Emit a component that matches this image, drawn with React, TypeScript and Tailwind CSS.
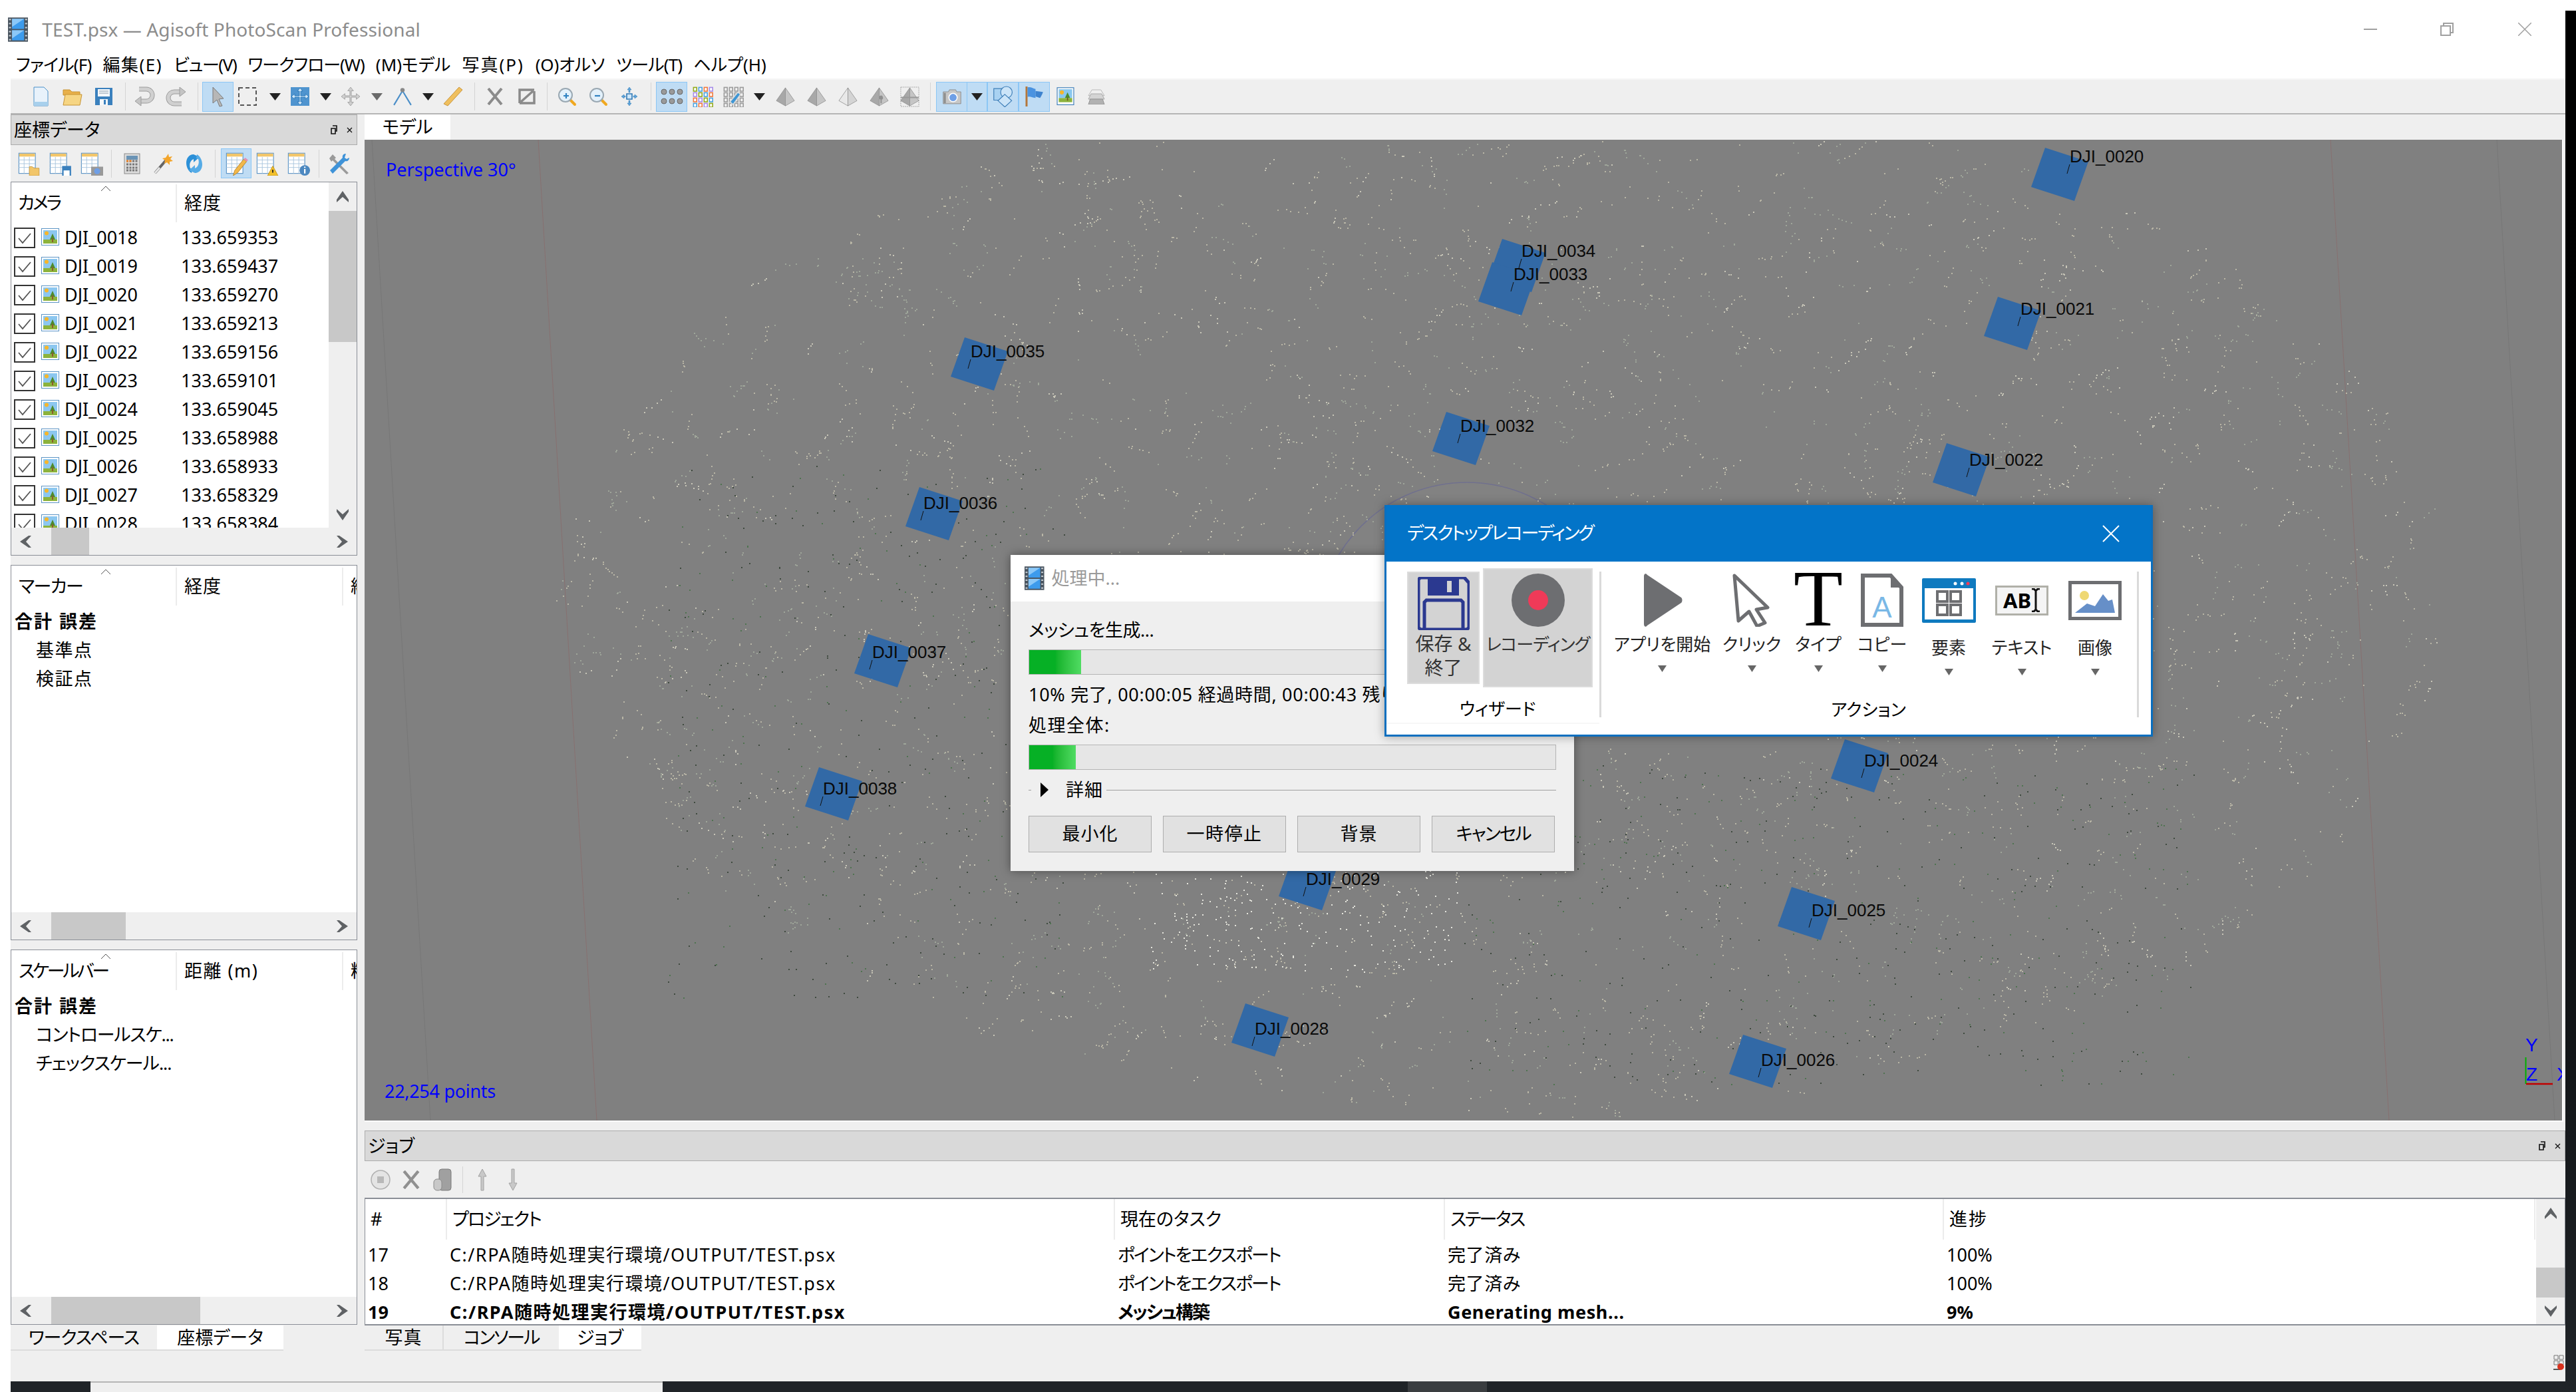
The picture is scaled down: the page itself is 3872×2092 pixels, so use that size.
import React from "react";

const rows = [
  ["DJI_0018", "133.659353"],
  ["DJI_0019", "133.659437"],
  ["DJI_0020", "133.659270"],
  ["DJI_0021", "133.659213"],
  ["DJI_0022", "133.659156"],
  ["DJI_0023", "133.659101"],
  ["DJI_0024", "133.659045"],
  ["DJI_0025", "133.658988"],
  ["DJI_0026", "133.658933"],
  ["DJI_0027", "133.658329"],
  ["DJI_0028", "133.658384"],
];

const menus: [string, string][] = [
  ["ファイル(F)", "tracking-[-0.8px]"],
  ["編集(E)", "tracking-[1.5px]"],
  ["ビュー(V)", "tracking-[-1.4px]"],
  ["ワークフロー(W)", "tracking-[-1px]"],
  ["(M)モデル", "tracking-[0px]"],
  ["写真(P)", "tracking-[2px]"],
  ["(O)オルソ", "tracking-[-0.2px]"],
  ["ツール(T)", "tracking-[-0.8px]"],
  ["ヘルプ(H)", "tracking-[0px]"],
];

// camera: centre x, y, label x, label centre y (page coordinates)
const cameras: [string, number, number, number, number][] = [
  ["DJI_0020", 3096, 262, 3111, 235],
  ["DJI_0034", 2280, 399, 2287, 377],
  ["DJI_0033", 2265, 434, 2275, 412],
  ["DJI_0021", 3025, 486, 3037, 464],
  ["DJI_0035", 1472, 547, 1459, 528],
  ["DJI_0032", 2196, 659, 2195, 640],
  ["DJI_0022", 2948, 706, 2960, 691],
  ["DJI_0036", 1404, 772, 1388, 756],
  ["DJI_0037", 1327, 993, 1311, 980],
  ["DJI_0038", 1253, 1193, 1237, 1185],
  ["DJI_0024", 2795, 1151, 2802, 1143],
  ["DJI_0029", 1965, 1328, 1963, 1321],
  ["DJI_0025", 2715, 1373, 2723, 1368],
  ["DJI_0028", 1894, 1548, 1886, 1546],
  ["DJI_0026", 2642, 1595, 2647, 1593],
];

function makeCloud() {
  let seed = 12345;
  const rnd = () => {
    seed = (seed * 1664525 + 1013904223) % 4294967296;
    return seed / 4294967296;
  };
  const groups: Record<string, string> = { "#b9b6a6": "", "#c8c6b8": "", "#9fa69a": "", "#e4e4dc": "", "#3f4a3f": "", "#4f7350": "" };
  const add = (c: string, x: number, y: number, s: number) => {
    if (x < 552 || x > 3850 || y < 212 || y > 1682) return;
    groups[c] += `M${Math.round(x)} ${Math.round(y)}h${s}v${s}h-${s}z`;
  };
  // main ring of light points, in short streaks
  for (let i = 0; i < 2400; i++) {
    const a = rnd() * Math.PI * 2;
    const r = Math.sqrt(rnd());
    const cx = 2260 + Math.cos(a) * r * 1420;
    const cy = 900 + Math.sin(a) * r * 780;
    const n = 1 + Math.floor(rnd() * 5);
    const dir = rnd() * Math.PI;
    const c = rnd() < 0.5 ? "#b9b6a6" : rnd() < 0.6 ? "#9fa69a" : "#c8c6b8";
    for (let k = 0; k < n; k++) {
      const t = (rnd() - 0.5) * 40;
      add(c, cx + Math.cos(dir) * t + (rnd() - 0.5) * 6, cy + Math.sin(dir) * t + (rnd() - 0.5) * 6, 2);
    }
  }
  // bright patch under the progress dialog
  for (let i = 0; i < 260; i++) {
    add("#e4e4dc", 1960 + (rnd() - 0.5) * 460, 1375 + (rnd() - 0.5) * 170, 2);
  }
  // dark points on the edges and in the lower part
  for (let i = 0; i < 900; i++) {
    const left = rnd() < 0.45;
    const x = left ? 1000 + rnd() * 600 : 2200 + rnd() * 1100;
    const y = left ? 700 + rnd() * 800 : 1150 + rnd() * 480;
    add(rnd() < 0.6 ? "#3f4a3f" : "#4f7350", x, y, 2);
  }
  return groups;
}
const cloud = makeCloud();

const Film = ({ size = 36 }: { size?: number }) => (
  <svg width={size * 0.82} height={size} viewBox="0 0 30 36">
    <rect x="0" y="0" width="30" height="36" fill="#4a5560" />
    <rect x="6" y="2" width="18" height="15" fill="#3d9bec" />
    <rect x="6" y="19" width="18" height="15" fill="#3d9bec" />
    <path d="M6 2h18L6 14zM6 19h18L6 31z" fill="#8cc8f7" />
    {[3, 9, 15, 21, 27, 33].map((y) => (
      <g key={y}>
        <rect x="1.5" y={y - 1} width="3" height="2" fill="#c9d0d6" />
        <rect x="25.5" y={y - 1} width="3" height="2" fill="#c9d0d6" />
      </g>
    ))}
  </svg>
);

const Caret = ({ dim }: { dim?: boolean }) => (
  <svg width="17" height="11" viewBox="0 0 17 11">
    <path d="M0 0h17L8.5 11z" fill={dim ? "#6a6a6a" : "#222"} />
  </svg>
);

const Tb = ({ cls, active, children }: { cls: string; active?: boolean; children?: React.ReactNode }) => (
  <div className={`${cls} flex shrink-0 items-center justify-center ${active ? "h-[45px] border border-[#8cc6f5] bg-[#bfdcf4]" : "h-full"}`}>{children}</div>
);

const Sep = ({ cls }: { cls: string }) => (
  <div className={`${cls} flex h-full shrink-0 items-center justify-center`}>
    <div className="h-[42px] w-px bg-[#d4d4d4]" />
  </div>
);

const I = ({ children, w = 32, h = 32 }: { children: React.ReactNode; w?: number; h?: number }) => (
  <svg width={w} height={h} viewBox="0 0 32 32">
    {children}
  </svg>
);

const Pyramid = ({ kind }: { kind: number }) => (
  <I w={31} h={31}>
    <path d="M16 2L2 22l14 8z" fill={kind === 2 ? "#e8e8e8" : "#a8a8a8"} stroke="#8f8f8f" strokeWidth=".8" />
    <path d="M16 2l14 20-14 8z" fill={kind === 2 ? "#d4d4d4" : "#c5c5c5"} stroke="#8f8f8f" strokeWidth=".8" />
    {kind === 3 && <path d="M19 14c-3 0-4 3-3 5 1 1 2 1 2 1v6h2v-6s2 0 2-2-1-4-3-4z" fill="#909090" />}
    {kind === 4 && <path d="M2 1h28v30H2z" fill="none" stroke="#777" strokeWidth=".8" strokeDasharray="1.5 1.5" />}
    {kind === 4 && <path d="M2 17h28" stroke="#999" strokeWidth="2" />}
  </I>
);

const Sheet = ({ children }: { children?: React.ReactNode }) => (
  <I w={36} h={36}>
    <rect x="3" y="2" width="22" height="27" fill="#fff" stroke="#5c94c6" />
    <rect x="3.5" y="2.5" width="21" height="4" fill="#f2c66a" />
    <path d="M3 11h22M3 16h22M3 21h22M10 7v22M17 7v22" stroke="#a8c4dc" strokeWidth=".8" />
    {children}
  </I>
);

const Thumb = () => (
  <svg width="27" height="27" viewBox="0 0 27 27">
    <rect x=".5" y=".5" width="26" height="25" fill="#fff" stroke="#5d95c5" />
    <rect x="3" y="3" width="21" height="14" fill="#8cc7f0" />
    <rect x="3" y="17" width="21" height="6" fill="#8cb33d" />
    <circle cx="8" cy="7.5" r="3" fill="#f6b62b" />
    <path d="M17 8l4 9h-8z" fill="#4f8b2b" />
    <rect x="16" y="15" width="2" height="6" fill="#8a5a2b" />
  </svg>
);

const Chevron = ({ dir }: { dir: "up" | "down" | "left" | "right" }) => {
  const d = {
    up: "M0 13L9 0l9 13v4L9 9l-9 8z",
    down: "M0 5l9 13 9-13V1L9 9 0 1z",
    left: "M13 0L0 9l13 9h4L9 9l8-9z",
    right: "M5 0l13 9-13 9H1l8-9-8-9z",
  }[dir];
  return (
    <svg width="18" height="18" viewBox="0 0 18 18">
      <path d={d} fill="#5f6265" />
    </svg>
  );
};

const SortMark = () => (
  <svg className="absolute left-[134px] top-[5px]" width="16" height="9" viewBox="0 0 16 9">
    <path d="M1 8l7-7 7 7" fill="none" stroke="#555" />
  </svg>
);

const HBar = ({ thumb }: { thumb: string }) => (
  <div className="flex h-[41px] shrink-0 items-center bg-[#efefef]">
    <div className="flex w-[44px] shrink-0 justify-center">
      <Chevron dir="left" />
    </div>
    <div className="min-w-0 flex-1 self-stretch">
      <div className={`${thumb} h-full bg-[#c8c8c8]`} />
    </div>
    <div className="flex w-[44px] shrink-0 justify-center">
      <Chevron dir="right" />
    </div>
  </div>
);

const DockTitle = ({ title, cls }: { title: string; cls: string }) => (
  <div className={`${cls} flex h-[46px] shrink-0 items-center border border-[#ababab] bg-[#d9d9d9] pl-[4px] pr-[6px] text-[27px]`}>
    <span className="flex-1">{title}</span>
    <svg width="10" height="14" viewBox="0 0 10 14" className="mr-[14px]">
      <path d="M3 1h6v8H7M1 5h6v8H1z" fill="none" stroke="#111" strokeWidth="1.6" />
    </svg>
    <svg width="9" height="9" viewBox="0 0 9 9">
      <path d="M1 1l7 7M8 1L1 8" stroke="#111" strokeWidth="1.3" />
    </svg>
  </div>
);

const TreePanel = ({
  head,
  second,
  third,
  sub,
  thumb,
}: {
  head: React.ReactNode;
  second: React.ReactNode;
  third: string;
  sub: [string, string][];
  thumb: string;
}) => (
  <div className="mt-[14px] flex h-[564px] shrink-0 flex-col border border-[#8a8e96] bg-white">
    <div className="relative flex h-[60px] shrink-0 overflow-hidden pt-[3px] text-[27px]">
      <SortMark />
      <div className="flex w-[249px] shrink-0 items-center border-r-2 border-[#ececec] pl-[11px]">{head}</div>
      <div className="flex w-[250px] shrink-0 items-center border-r-2 border-[#ececec] pl-[11px]">{second}</div>
      <div className="flex items-center pl-[11px]">{third}</div>
    </div>
    <div className="flex min-h-0 flex-1 flex-col pt-[3px] text-[27px]">
      <div className="flex h-[43px] shrink-0 items-center pl-[5px] font-bold tracking-[2px]">合計 誤差</div>
      {sub.map(([s, track]) => (
        <div key={s} className={`${track} flex h-[43px] shrink-0 items-center pl-[37px]`}>
          {s}
        </div>
      ))}
    </div>
    <HBar thumb={thumb} />
  </div>
);

const jobCols = "grid grid-cols-[123px_1004px_496px_750px_889px]";
const jobHeads: [string, string][] = [
  ["#", ""],
  ["プロジェクト", "tracking-[-2px]"],
  ["現在のタスク", ""],
  ["ステータス", "tracking-[-2.5px]"],
  ["進捗", "tracking-[2px]"],
];
const jobRows = [
  ["17", "C:/RPA随時処理実行環境/OUTPUT/TEST.psx", "ポイントをエクスポート", "完了済み", "100%"],
  ["18", "C:/RPA随時処理実行環境/OUTPUT/TEST.psx", "ポイントをエクスポート", "完了済み", "100%"],
  ["19", "C:/RPA随時処理実行環境/OUTPUT/TEST.psx", "メッシュ構築", "Generating mesh...", "9%"],
];
const jobTrack = ["", "tracking-[1.5px]", "tracking-[-2px]", "tracking-[0.6px]", ""];

const ActionItem = ({ cls, label, low, children }: { cls: string; label: string; low?: boolean; children: React.ReactNode }) => (
  <div className={`${cls} flex shrink-0 flex-col items-center`}>
    <div className="flex h-[80px] items-center justify-center">{children}</div>
    <div className={`${low ? "mt-[13px]" : "mt-[8px]"} h-[36px] whitespace-nowrap text-[26px] leading-[36px] text-[#222]`}>{label}</div>
    <svg width="13" height="10" viewBox="0 0 13 10" className="mt-[14px]">
      <path d="M0 0h13L6.5 10z" fill="#666" />
    </svg>
  </div>
);

const Btn = ({ children, cls }: { children: React.ReactNode; cls?: string }) => (
  <div className={`${cls ?? ""} flex h-[55px] w-[185px] items-center justify-center border border-[#adadad] bg-[#e1e1e1] text-[27px]`}>{children}</div>
);

const Progress = ({ fill }: { fill: string }) => (
  <div className="h-[38px] border border-[#b5b5b5] bg-[#e6e6e6]">
    <div className={`${fill} h-full bg-linear-to-r from-[#06b025] from-50% to-[#4fdc62]`} />
  </div>
);

export default function App() {
  return (
    <div className="relative flex h-[2092px] w-[3872px] overflow-hidden bg-white font-['Noto_Sans','Noto_Sans_CJK_JP',sans-serif] text-black [font-feature-settings:'palt']">
      <div className="flex w-[3856px] shrink-0 flex-col">
        {/* title */}
        <div className="flex h-[80px] shrink-0 items-center pl-[12px] pt-[8px]">
          <Film size={37} />
          <span className="ml-[21px] text-[28px] tracking-[0.1px] text-[#8c8c8c]">TEST.psx — Agisoft PhotoScan Professional</span>
          <div className="ml-auto flex items-center pr-[51px]">
            <svg width="20" height="20" viewBox="0 0 20 20">
              <path d="M0 10h20" stroke="#a0a0a0" strokeWidth="2" />
            </svg>
            <svg width="20" height="20" viewBox="0 0 20 20" className="ml-[95px]">
              <path d="M1 5h14v14H1zM5 5V1h14v14h-4" fill="none" stroke="#a0a0a0" strokeWidth="2" />
            </svg>
            <svg width="20" height="20" viewBox="0 0 20 20" className="ml-[97px]">
              <path d="M0 0l20 20M20 0L0 20" stroke="#a0a0a0" strokeWidth="1.5" />
            </svg>
          </div>
        </div>
        {/* menu */}
        <div className="flex h-[38px] shrink-0 items-center gap-[17px] pb-[3px] pl-[24px] text-[26px]">
          {menus.map(([m, track]) => (
            <span key={m} className={`${track} whitespace-nowrap`}>
              {m}
            </span>
          ))}
        </div>

        <div className="ml-[16px] flex min-h-0 flex-1 flex-col bg-[#efefef]">
          {/* main toolbar */}
          <div className="flex h-[54px] shrink-0 items-center border-b-2 border-t-2 border-b-[#b5b5b5] border-t-[#f5f5f5] pl-[22px]">
            <Tb cls="w-[47px]">
              <I>
                <path d="M5 2h15l6 6v22H5z" fill="#e8f2fb" stroke="#4a90c8" />
                <path d="M5 24h21v6H5z" fill="#a8d0ec" />
              </I>
            </Tb>
            <Tb cls="w-[47px]">
              <I>
                <path d="M2 6h10l3 3h12v5H2z" fill="#e8b04a" stroke="#c79333" />
                <path d="M2 29l3-16h25l-3 16z" fill="#f6d583" stroke="#c79333" />
              </I>
            </Tb>
            <Tb cls="w-[48px]">
              <I>
                <path d="M3 3h26v26H3z" fill="#3a80bd" />
                <path d="M7 5h18v11H7z" fill="#f4f7fa" />
                <path d="M9 8h14M9 11h14" stroke="#8a9aaa" />
                <path d="M10 20h12v9H10z" fill="#f4f7fa" />
                <path d="M16 21h3v7h-3z" fill="#3a80bd" />
              </I>
            </Tb>
            <Sep cls="w-[16px]" />
            <Tb cls="w-[42px]">
              <I>
                <path d="M8 5h11a9 9 0 0 1 0 18H10" fill="none" stroke="#9c9c9c" strokeWidth="7" />
                <path d="M8 5h11a9 9 0 0 1 0 18H10" fill="none" stroke="#d0d0d0" strokeWidth="5" />
                <path d="M11 16L2 23l9 7z" fill="#c4c4c4" stroke="#9c9c9c" />
              </I>
            </Tb>
            <Tb cls="w-[54px]">
              <I>
                <path d="M24 27H13a9 9 0 0 1 0-18h9" fill="none" stroke="#9c9c9c" strokeWidth="7" />
                <path d="M24 27H13a9 9 0 0 1 0-18h9" fill="none" stroke="#d0d0d0" strokeWidth="5" />
                <path d="M21 2l9 7-9 7z" fill="#c4c4c4" stroke="#9c9c9c" />
              </I>
            </Tb>
            <Sep cls="w-[10px]" />
            <Tb cls="ml-[2px] w-[47px]" active>
              <I>
                <path d="M8 2l16 17-7 1 5 10-4 1-4-10-6 5z" fill="#b7b7b7" stroke="#7a7a7a" />
              </I>
            </Tb>
            <Tb cls="w-[42px]">
              <I>
                <path d="M3 3h26v26H3z" fill="none" stroke="#555" strokeWidth="2" strokeDasharray="6 4" />
              </I>
            </Tb>
            <Tb cls="w-[40px]">
              <Caret />
            </Tb>
            <Tb cls="ml-[4px] w-[28px]">
              <svg width="28" height="28" viewBox="0 0 28 28" className="bg-[#4f94cf]">
                <path d="M14 1l4 5h-3v7h7v-3l5 4-5 4v-3h-7v7h3l-4 5-4-5h3v-7H6v3l-5-4 5-4v3h7V6h-3z" fill="#cfe6f8" stroke="#1f6fb3" strokeWidth=".8" />
              </svg>
            </Tb>
            <Tb cls="w-[48px]">
              <Caret />
            </Tb>
            <Tb cls="w-[28px]">
              <svg width="30" height="30" viewBox="0 0 28 28" className="shrink-0">
                <path d="M14 1l4 5h-3v7h7v-3l5 4-5 4v-3h-7v7h3l-4 5-4-5h3v-7H6v3l-5-4 5-4v3h7V6h-3z" fill="#d0d0d0" stroke="#9c9c9c" strokeWidth=".8" />
              </svg>
            </Tb>
            <Tb cls="w-[50px]">
              <Caret dim />
            </Tb>
            <Tb cls="w-[28px]">
              <svg width="30" height="30" viewBox="0 0 28 28" className="shrink-0">
                <path d="M14 6L2 26M14 6l12 20" fill="none" stroke="#4a8ec8" strokeWidth="2" />
                <circle cx="14" cy="5" r="3" fill="#888" />
              </svg>
            </Tb>
            <Tb cls="w-[48px]">
              <Caret />
            </Tb>
            <Tb cls="w-[28px]">
              <svg width="32" height="32" viewBox="0 0 32 32" className="shrink-0">
                <path d="M25 2l5 4L8 30l-6-3z" fill="#efbf5e" stroke="#c9953a" />
              </svg>
            </Tb>
            <Sep cls="w-[36px]" />
            <Tb cls="w-[26px]">
              <svg width="26" height="26" viewBox="0 0 26 26" className="shrink-0">
                <path d="M3 1l10 12L23 1M3 25l10-12 10 12" fill="none" stroke="#8b8b8b" strokeWidth="4" />
              </svg>
            </Tb>
            <Tb cls="ml-[20px] w-[28px]">
              <svg width="28" height="28" viewBox="0 0 28 28" className="shrink-0">
                <path d="M4 24V4h22M4 24h22V6M6 22L24 6" fill="none" stroke="#8a8a8a" strokeWidth="3.5" />
              </svg>
            </Tb>
            <Sep cls="w-[34px]" />
            {["M10 14h8M14 10v8", "M10 14h8"].map((d, i) => (
              <Tb key={i} cls={i ? "ml-[21px] w-[26px]" : "w-[26px]"}>
                <svg width="30" height="30" viewBox="0 0 30 30" className="shrink-0">
                  <path d="M19 19l8 8" stroke="#f0a820" strokeWidth="4" strokeLinecap="round" />
                  <circle cx="13" cy="13" r="10" fill="#e3f1fb" stroke="#9aa8b2" strokeWidth="2" />
                  <path d={d} stroke="#2f82c2" strokeWidth="2.2" />
                </svg>
              </Tb>
            ))}
            <Tb cls="ml-[21px] w-[26px]">
              <svg width="26" height="30" viewBox="0 0 26 30" className="shrink-0">
                <path d="M9 11h8v8H9z" fill="#cfe6f8" stroke="#2f78b5" strokeWidth="1.6" />
                <path d="M13 1l3 4h-2v4h-2V5h-2zM13 29l3-4h-2v-4h-2v4h-2zM1 15l4-3v2h2v2H5v2zM25 15l-4-3v2h-2v2h2v2z" fill="#5da2d8" stroke="#2f78b5" strokeWidth=".5" />
              </svg>
            </Tb>
            <Tb cls="w-[27px]">
              <div className="ml-[12px] h-[42px] w-px bg-[#d4d4d4]" />
            </Tb>
            <Tb cls="w-[47px]" active>
              <svg width="36" height="26" viewBox="0 0 36 26">
                {[6, 18, 30].map((x) => [6, 20].map((y) => <circle key={`${x}${y}`} cx={x} cy={y} r="4" fill="#9a9a9a" stroke="#666" />))}
              </svg>
            </Tb>
            <Tb cls="w-[46px]">
              <svg width="32" height="32" viewBox="0 0 40 40">
                {[3, 13, 23, 33].map((x, i) =>
                  [3, 13, 23, 33].map((y, j) => (
                    <rect key={`${x}${y}`} x={x} y={y} width="6" height="7" fill="#fff" stroke={["#93ab1e", "#4aa2e0", "#f0793e", "#a68be8"][(i + j * 3) % 4]} strokeWidth="2" />
                  ))
                )}
              </svg>
            </Tb>
            <Tb cls="w-[46px]">
              <svg width="32" height="32" viewBox="0 0 40 40">
                {[3, 13, 23, 33].map((x) =>
                  [3, 13, 23, 33].map((y) => <rect key={`${x}${y}`} x={x} y={y} width="6" height="7" fill="#f2f2f2" stroke="#9b9b9b" strokeWidth="2" />)
                )}
                <path d="M14 30l15-18 5 4-14 19z" fill="#3f96d4" stroke="#ddd" strokeWidth="2" />
              </svg>
            </Tb>
            <Tb cls="w-[32px]">
              <Caret />
            </Tb>
            <Tb cls="w-[46px]">
              <Pyramid kind={0} />
            </Tb>
            <Tb cls="ml-[1px] w-[46px]">
              <Pyramid kind={1} />
            </Tb>
            <Tb cls="ml-[1px] w-[46px]">
              <Pyramid kind={2} />
            </Tb>
            <Tb cls="ml-[1px] w-[46px]">
              <Pyramid kind={3} />
            </Tb>
            <Tb cls="w-[46px]">
              <Pyramid kind={4} />
            </Tb>
            <Sep cls="w-[17px]" />
            <Tb cls="w-[47px]" active>
              <svg width="28" height="24" viewBox="0 0 36 30">
                <path d="M1 6h10l2-4h12l2 4h8v23H1z" fill="#c7c7c7" stroke="#7e7e7e" />
                <circle cx="20" cy="17" r="8" fill="#6f9fe6" stroke="#fff" strokeWidth="2" />
                <rect x="2" y="8" width="4" height="20" fill="#8e8e8e" />
              </svg>
            </Tb>
            <Tb cls="w-[30px] border-l-0" active>
              <Caret />
            </Tb>
            <Tb cls="w-[47px]" active>
              <svg width="30" height="32" viewBox="0 0 38 40">
                <path d="M1 5h20v22H1z" fill="#a9d2f2" stroke="#3f7fb8" strokeWidth="1.5" />
                <circle cx="25" cy="12" r="11" fill="#cbe4f8" stroke="#3f7fb8" strokeWidth="1.5" />
                <path d="M22 16l13 12-13 12-13-12z" fill="#cbe4f8" stroke="#3f7fb8" strokeWidth="1.5" />
              </svg>
            </Tb>
            <Tb cls="w-[47px]" active>
              <svg width="30" height="32" viewBox="0 0 40 42">
                <rect x="2" y="1" width="4" height="40" fill="#b4763a" />
                <path d="M6 3c6-2 10 2 16 3v18c-6 0-10-4-16-2z" fill="#4b93e0" />
                <path d="M22 10l15 2c-2 6-4 9-6 12l-9-3z" fill="#3e83cf" />
              </svg>
            </Tb>
            <Tb cls="w-[46px]">
              <svg width="27" height="28" viewBox="0 0 34 36">
                <rect x="1" y="1" width="32" height="33" fill="#fff" stroke="#3f7fb8" strokeWidth="1.5" />
                <rect x="4" y="4" width="26" height="17" fill="#8ac8ee" />
                <rect x="4" y="21" width="26" height="8" fill="#8cb33d" />
                <circle cx="10" cy="10" r="4" fill="#f6b62b" />
                <path d="M21 10l5 11H16z" fill="#4f8b2b" />
                <rect x="20" y="20" width="2" height="6" fill="#7a4f20" />
              </svg>
            </Tb>
            <Tb cls="w-[48px]">
              <svg width="30" height="24" viewBox="0 0 38 36">
                <path d="M9 3h20l8 13H1z" fill="#efefef" stroke="#b8b8b8" strokeWidth="1.5" />
                <path d="M7 12h24l6 12H1z" fill="#d4d4d4" stroke="#a8a8a8" strokeWidth="1.5" />
                <path d="M5 24h28l4 12H1z" fill="#b2b2b2" stroke="#939393" strokeWidth="1.5" />
              </svg>
            </Tb>
          </div>

          {/* dock area */}
          <div className="flex min-h-0 shrink-0">
            {/* left column */}
            <div className="flex w-[521px] shrink-0 flex-col">
              <DockTitle title="座標データ" cls="" />
              <div className="flex h-[55px] shrink-0 items-center pl-[3px]">
                <Tb cls="w-[47px]">
                  <Sheet>
                    <path d="M17 20h4l2 2h7v10H17z" fill="#f2c66a" stroke="#c79333" strokeWidth=".7" />
                  </Sheet>
                </Tb>
                <Tb cls="w-[47px]">
                  <Sheet>
                    <rect x="19" y="19" width="12" height="13" fill="#3a80bd" />
                    <rect x="21" y="25" width="8" height="7" fill="#fff" />
                  </Sheet>
                </Tb>
                <Tb cls="w-[47px]">
                  <Sheet>
                    <rect x="16" y="20" width="16" height="12" fill="#999" />
                    <circle cx="24" cy="26" r="4" fill="#6f9fe6" />
                  </Sheet>
                </Tb>
                <Sep cls="w-[14px]" />
                <Tb cls="w-[47px]">
                  <I>
                    <rect x="5" y="1" width="23" height="30" fill="#dcdcdc" stroke="#8a8a8a" />
                    <rect x="8" y="4" width="17" height="6" fill="#6a93b5" />
                    {[12, 17, 22, 26].map((y) => (
                      <path key={y} d={`M8 ${y}h17`} stroke="#777" strokeWidth="3" strokeDasharray="3 1.5" />
                    ))}
                    <path d="M8 12h8" stroke="#e9842b" strokeWidth="3" strokeDasharray="3 1.5" />
                  </I>
                </Tb>
                <Tb cls="w-[47px]">
                  <I>
                    <path d="M4 30L22 9" stroke="#666" strokeWidth="4" />
                    <path d="M4 30l7-8" stroke="#e6e6e6" strokeWidth="3" />
                    <path d="M24 1l1 5 5-1-3 4 4 3-5 1 0 5-4-4-4 2 1-5-4-3 5-1z" fill="#f3a52b" />
                  </I>
                </Tb>
                <Tb cls="w-[47px]">
                  <I>
                    <path d="M15 2C8 2 4 8 4 15s4 13 8 15l1-6-3-1c-2-6 0-12 5-14v5l9-8z" fill="#2c90d8" />
                    <path d="M17 30c7 0 11-6 11-13S24 4 20 2l-1 6 3 1c2 6 0 12-5 14v-5l-9 8z" fill="#55abe6" />
                  </I>
                </Tb>
                <Sep cls="w-[16px]" />
                <Tb cls="ml-[1px] w-[46px]" active>
                  <Sheet>
                    <path d="M12 32l2-7L26 10l4 3-12 15z" fill="#f2b84a" stroke="#a97820" strokeWidth=".7" />
                    <path d="M26 10l2-2 4 3-2 2z" fill="#e58fb0" />
                  </Sheet>
                </Tb>
                <Tb cls="w-[46px]">
                  <Sheet>
                    <path d="M24 19l7 13H17z" fill="#f3c02b" stroke="#b98a10" strokeWidth=".7" />
                    <path d="M24 24v4" stroke="#222" strokeWidth="1.6" />
                  </Sheet>
                </Tb>
                <Tb cls="w-[47px]">
                  <Sheet>
                    <circle cx="25" cy="25" r="7" fill="#4c88c0" />
                    <path d="M25 23v6M25 20v1.6" stroke="#fff" strokeWidth="2" />
                  </Sheet>
                </Tb>
                <Sep cls="w-[16px]" />
                <Tb cls="w-[46px]">
                  <I>
                    <path d="M6 2l5 5-2 2 21 21-3 2L6 11 4 13 1 8z" fill="#9a9a9a" />
                    <path d="M26 1c-4 0-6 3-5 6L2 26l4 5L25 12c3 1 6-1 6-5l-4 2-3-2z" fill="#3f93d8" />
                  </I>
                </Tb>
              </div>

              {/* camera table */}
              <div className="flex h-[562px] shrink-0 flex-col border border-[#8a8e96] bg-white">
                <div className="flex min-h-0 flex-1">
                  <div className="min-w-0 flex-1 overflow-hidden">
                    <div className="relative flex h-[60px] pt-[3px] text-[27px]">
                      <SortMark />
                      <div className="flex w-[249px] shrink-0 items-center border-r-2 border-[#ececec] pl-[10px] tracking-[-3px]">カメラ</div>
                      <div className="flex items-center pl-[11px] tracking-[1px]">経度</div>
                    </div>
                    <div className="pt-[2px]">
                      {rows.map(([name, lon]) => (
                        <div key={name} className="flex h-[43px] items-center text-[27px]">
                          <div className="ml-[4px] flex h-[31px] w-[32px] shrink-0 items-center justify-center border-2 border-[#333]">
                            <svg width="22" height="20" viewBox="0 0 22 20">
                              <path d="M2 10l6 7L20 3" fill="none" stroke="#555" strokeWidth="1.8" />
                            </svg>
                          </div>
                          <div className="mb-[3px] ml-[9px] shrink-0">
                            <Thumb />
                          </div>
                          <div className="ml-[8px] w-[175px] shrink-0">{name}</div>
                          <div className="whitespace-nowrap">{lon}</div>
                        </div>
                      ))}
                    </div>
                  </div>
                  <div className="flex w-[42px] shrink-0 flex-col bg-[#efefef]">
                    <div className="flex h-[43px] shrink-0 items-center justify-center">
                      <Chevron dir="up" />
                    </div>
                    <div className="min-h-0 flex-1">
                      <div className="h-[197px] bg-[#c8c8c8]" />
                    </div>
                    <div className="flex h-[40px] shrink-0 items-center justify-center">
                      <Chevron dir="down" />
                    </div>
                  </div>
                </div>
                <HBar thumb="w-[57px] ml-[16px]" />
              </div>

              <TreePanel
                head={<span className="tracking-[-1.5px]">マーカー</span>}
                second={<span className="tracking-[1px]">経度</span>}
                third="緯"
                sub={[
                  ["基準点", "tracking-[1.5px]"],
                  ["検証点", "tracking-[1.5px]"],
                ]}
                thumb="w-[112px] ml-[16px]"
              />
              <TreePanel
                head={<span className="tracking-[-3.3px]">スケールバー</span>}
                second={<span className="tracking-[1.5px]">距離 (m)</span>}
                third="精"
                sub={[
                  ["コントロールスケ...", "tracking-[-1.2px]"],
                  ["チェックスケール...", "tracking-[-1px]"],
                ]}
                thumb="w-[224px] ml-[16px]"
              />
            </div>

            {/* right column */}
            <div className="ml-[11px] flex min-w-0 flex-1 flex-col">
              <div className="flex h-[38px] shrink-0">
                <div className="flex w-[129px] items-center justify-center bg-white text-[27px]">モデル</div>
              </div>
              <div className="h-[1476px] shrink-0 pr-[3px]">
                <div className="relative h-full overflow-hidden border-b-2 border-r-2 border-white bg-[#808080]">
                  <svg className="absolute left-0 top-0" width="3304" height="1474" viewBox="548 210 3304 1474">
                    <path d="M559 210L647 1684M3753 210L3840 1684" stroke="#777777" strokeWidth="1" fill="none" />
                    <path d="M809 210L897 1684M3503 210L3591 1684" stroke="#877070" strokeWidth="1" fill="none" />
                    <circle cx="2205" cy="950" r="225" fill="#828282" stroke="#70708e" strokeWidth="1.5" />
                    {Object.entries(cloud).map(([c, d]) => (
                      <path key={c} d={d} fill={c} />
                    ))}
                    {cameras.map(([name, x, y]) => (
                      <polygon key={name} points={`${x - 22},${y - 40} ${x + 43},${y - 19} ${x + 22},${y + 40} ${x - 43},${y + 19}`} fill="#3269a6" />
                    ))}
                    {cameras.map(([name, , , lx, ly]) => (
                      <g key={name}>
                        <path d={`M${lx} ${ly + 12}l-4 14`} stroke="#111" strokeWidth="1" />
                        <text x={lx} y={ly + 9} fontSize="26" fill="#0a0a0a" fontFamily="Liberation Sans">
                          {name}
                        </text>
                      </g>
                    ))}
                    {/* axis gizmo */}
                    <path d="M3796.5 1589v40" stroke="#00b000" strokeWidth="2" />
                    <path d="M3797 1629h40" stroke="#c00000" strokeWidth="2.5" />
                    <g fill="#0000ff" fontSize="28" fontFamily="Liberation Sans">
                      <text x="3796" y="1580">Y</text>
                      <text x="3797" y="1624">Z</text>
                      <text x="3843" y="1624">X</text>
                    </g>
                  </svg>
                  <div className="absolute left-[32px] top-[25px] text-[27px] text-[#0000ff]">Perspective 30°</div>
                  <div className="absolute bottom-[24px] left-[30px] text-[27px] tracking-[-0.3px] text-[#0000ff]">22,254 points</div>
                </div>
              </div>

              <DockTitle title="ジョブ" cls="mt-[13px]" />
              <div className="flex h-[55px] shrink-0 items-center pl-[8px]">
                <svg width="32" height="32" viewBox="0 0 32 32">
                  <circle cx="16" cy="16" r="14" fill="#e4e4e4" stroke="#b0b0b0" strokeWidth="1.5" />
                  <rect x="11" y="11" width="10" height="10" fill="#b8b8b8" />
                </svg>
                <svg width="28" height="28" viewBox="0 0 26 26" className="ml-[16px]">
                  <path d="M3 1l10 12L23 1M3 25l10-12 10 12" fill="none" stroke="#909090" strokeWidth="4" />
                </svg>
                <svg width="30" height="34" viewBox="0 0 30 34" className="ml-[18px]">
                  <rect x="10" y="1" width="18" height="32" rx="4" fill="#a0a0a0" stroke="#7c7c7c" />
                  <rect x="2" y="16" width="12" height="17" rx="5" fill="#c8c8c8" stroke="#8a8a8a" />
                </svg>
                <div className="ml-[15px] h-[40px] w-px bg-[#d4d4d4]" />
                <svg width="14" height="34" viewBox="0 0 14 34" className="ml-[22px]">
                  <path d="M7 1l6 11H9v21H5V12H1z" fill="#c8c8c8" stroke="#a2a2a2" />
                </svg>
                <svg width="14" height="34" viewBox="0 0 14 34" className="ml-[32px]">
                  <path d="M7 33l6-11H9V1H5v21H1z" fill="#c8c8c8" stroke="#a2a2a2" />
                </svg>
              </div>

              <div className="flex h-[192px] shrink-0 border-x border-b-2 border-t-2 border-[#8a8e96] bg-white">
                <div className="min-w-0 flex-1 overflow-hidden">
                  <div className={`${jobCols} h-[61px] text-[27px]`}>
                    {jobHeads.map(([h, track]) => (
                      <div key={h} className={`${track} flex items-center border-r-2 border-[#ececec] pl-[8px]`}>
                        {h}
                      </div>
                    ))}
                  </div>
                  <div className="pt-[2px]">
                    {jobRows.map((r, i) => (
                      <div key={r[0]} className={`${jobCols} h-[43px] items-center text-[27px] ${i === 2 ? "font-bold" : ""}`}>
                        {r.map((c, j) => (
                          <div key={j} className={`${jobTrack[j]} whitespace-nowrap pl-[4px]`}>
                            {c}
                          </div>
                        ))}
                      </div>
                    ))}
                  </div>
                </div>
                <div className="flex w-[43px] shrink-0 flex-col bg-[#efefef]">
                  <div className="flex h-[43px] shrink-0 items-center justify-center">
                    <Chevron dir="up" />
                  </div>
                  <div className="min-h-0 flex-1 pt-[60px]">
                    <div className="h-[45px] bg-[#c8c8c8]" />
                  </div>
                  <div className="flex h-[40px] shrink-0 items-center justify-center">
                    <Chevron dir="down" />
                  </div>
                </div>
              </div>
            </div>
          </div>

          {/* lower tabs */}
          <div className="flex min-h-0 flex-1 text-[27px]">
            <div className="flex h-[38px] w-[521px] shrink-0">
              <div className="flex w-[220px] items-center justify-center border-b-2 border-[#dcdcdc] tracking-[-1px]">ワークスペース</div>
              <div className="flex w-[190px] items-center justify-center border-b-2 border-[#dcdcdc] bg-white">座標データ</div>
            </div>
            <div className="ml-[11px] flex h-[38px] flex-1">
              <div className="flex w-[119px] items-center justify-center border-b-2 border-r-2 border-[#dcdcdc] tracking-[1px]">写真</div>
              <div className="flex w-[173px] items-center justify-center border-b-2 border-[#dcdcdc] tracking-[-2px]">コンソール</div>
              <div className="flex w-[124px] items-center justify-center border-b-2 border-[#dcdcdc] bg-white">ジョブ</div>
              <div className="ml-auto mr-[2px] mt-[44px] h-[26px]">
                <svg width="16" height="28" viewBox="0 0 16 28">
                  <path d="M1 1h6v6H1zM9 1h6v6H9zM1 9h6v6H1zM9 9h6v6H9z" fill="none" stroke="#777" />
                  <path d="M0 22h10" stroke="#555" strokeWidth="2" />
                  <circle cx="11" cy="18" r="5" fill="#d8321e" />
                </svg>
              </div>
            </div>
          </div>

          {/* desktop strip */}
          <div className="flex h-[16px] shrink-0 bg-[#202428]">
            <div className="w-[120px] shrink-0" />
            <div className="w-[860px] shrink-0 border-t-2 border-[#b5b5b5] bg-[#efefef]" />
            <div className="ml-[1120px] w-[119px] shrink-0 bg-[#3a3d40]" />
          </div>
        </div>
      </div>
      <div className="min-w-0 flex-1 pt-[16px]">
        <div className="h-full bg-linear-to-b from-black to-[#202428]" />
      </div>

      {/* processing dialog */}
      <div className="absolute left-[1519px] top-[834px] flex h-[475px] w-[847px] flex-col bg-[#efefef] shadow-[0_0_14px_rgba(0,0,0,0.4)]">
        <div className="flex h-[70px] shrink-0 items-center bg-white pl-[21px]">
          <Film size={36} />
          <span className="ml-[11px] text-[27px] text-[#9a9a9a]">処理中...</span>
        </div>
        <div className="flex flex-col px-[27px]">
          <div className="mt-[24px] h-[38px] text-[27px] leading-[38px] tracking-[-0.5px]">メッシュを生成...</div>
          <div className="mt-[10px]">
            <Progress fill="w-[78px]" />
          </div>
          <div className="mt-[11px] h-[38px] whitespace-nowrap text-[27px] leading-[38px] tracking-[0.7px]">10% 完了, 00:00:05 経過時間, 00:00:43 残り時間</div>
          <div className="mt-[8px] h-[38px] text-[27px] leading-[38px] tracking-[1.5px]">処理全体:</div>
          <div className="mt-[10px]">
            <Progress fill="w-[70px]" />
          </div>
          <div className="mt-[10px] flex h-[40px] items-center text-[27px]">
            <div className="h-px w-[4px] bg-[#a0a0a0]" />
            <svg width="12" height="22" viewBox="0 0 12 22" className="ml-[14px]">
              <path d="M0 0l12 11L0 22z" fill="#000" />
            </svg>
            <span className="ml-[26px] tracking-[1px]">詳細</span>
            <div className="ml-[5px] h-px flex-1 bg-[#a0a0a0]" />
          </div>
          <div className="mt-[19px] flex gap-[17px]">
            <Btn cls="tracking-[1px]">最小化</Btn>
            <Btn cls="tracking-[1.5px]">一時停止</Btn>
            <Btn cls="tracking-[1px]">背景</Btn>
            <Btn cls="tracking-[-2px]">キャンセル</Btn>
          </div>
        </div>
      </div>

      {/* recording dialog */}
      <div className="absolute left-[2081px] top-[759px] flex h-[348px] w-[1155px] flex-col border-[3px] border-t-0 border-[#0a6fbf] bg-white shadow-[0_0_14px_rgba(0,0,0,0.35)]">
        <div className="flex h-[85px] shrink-0 items-center justify-between bg-[#0374c8] pl-[31px] pr-[46px]">
          <span className="text-[27px] tracking-[-2.3px] text-white">デスクトップレコーディング</span>
          <svg width="28" height="28" viewBox="0 0 28 28">
            <path d="M2 2l24 24M26 2L2 26" stroke="#fff" strokeWidth="2" />
          </svg>
        </div>
        <div className="flex min-h-0 flex-1 pt-[10px]">
          <div className="flex h-[234px] w-[320px] shrink-0 flex-col border-b-2 border-[#f7f7f7]">
            <div className="flex items-center gap-[5px] pl-[31px]">
              <div className="flex h-[169px] w-[109px] flex-col items-center border-2 border-[#dcdcdc] bg-[#d3d3d3] pt-[6px] text-center text-[28px] leading-[36px] text-[#333]">
                <svg width="78" height="80" viewBox="0 0 78 80" className="shrink-0">
                  <path d="M4 1h66l7 8v67l-3 3H4l-3-3V4z" fill="none" stroke="#2b3990" strokeWidth="5" />
                  <path d="M15 1h47v27H15z" fill="#2b3990" />
                  <rect x="44" y="6" width="7" height="17" fill="#d3d3d3" />
                  <path d="M10 77V38l3-3h52l3 3v39" fill="none" stroke="#2b3990" strokeWidth="5" />
                </svg>
                <span className="mt-[2px]">
                  保存 &
                  <br />
                  終了
                </span>
              </div>
              <div className="flex h-[179px] w-[165px] flex-col items-center border-2 border-[#dcdcdc] bg-[#d3d3d3] pt-[6px] text-[26px] leading-[36px] tracking-[-1px] text-[#333]">
                <svg width="80" height="80" viewBox="0 0 80 80" className="shrink-0">
                  <circle cx="40" cy="40" r="40" fill="#6d6e71" />
                  <circle cx="40" cy="40" r="15" fill="#ef3a58" />
                </svg>
                <span className="mt-[8px] whitespace-nowrap">レコーディング</span>
              </div>
            </div>
            <div className="mt-[14px] pl-[14px] text-center text-[26px] leading-[36px]">ウィザード</div>
          </div>
          <div className="mt-[5px] h-[219px] w-[3px] shrink-0 bg-[#dadada]" />
          <div className="ml-[24px] flex w-[773px] shrink-0 flex-col pt-[8px]">
            <div className="flex h-[158px]">
              <ActionItem cls="w-[135px]" label="アプリを開始">
                <svg width="60" height="80" viewBox="0 0 60 80">
                  <path d="M2 4c0-4 3-5 5-2l51 34c2 2 2 6 0 8L7 78c-2 3-5 2-5-2z" fill="#6d6e71" />
                </svg>
              </ActionItem>
              <ActionItem cls="w-[134px]" label="クリック">
                <svg width="58" height="80" viewBox="0 0 58 80">
                  <path d="M3 3l50 48-17 3 13 20-12 5-12-22-16 14z" fill="#fff" stroke="#6d6e71" strokeWidth="5" strokeLinejoin="round" />
                </svg>
              </ActionItem>
              <ActionItem cls="w-[66px]" label="タイプ">
                <div className="font-['Liberation_Serif',serif] text-[121px] leading-[80px] [transform:translateY(-3px)]">T</div>
              </ActionItem>
              <ActionItem cls="w-[126px]" label="コピー">
                <svg width="64" height="80" viewBox="0 0 64 80">
                  <path d="M3 3h42l16 18v56H3z" fill="#fff" stroke="#6d6e71" strokeWidth="6" />
                  <path d="M45 3v18h16" fill="#6d6e71" />
                  <text x="32" y="66" textAnchor="middle" fontSize="44" fill="#7ab8e6" fontFamily="Liberation Sans">A</text>
                </svg>
              </ActionItem>
              <ActionItem cls="w-[74px]" label="要素" low>
                <svg width="81" height="67" viewBox="0 0 81 67" className="shrink-0">
                  <rect width="81" height="67" rx="2" fill="#0f7abf" />
                  <rect x="4" y="15" width="73" height="47" fill="#fff" />
                  <circle cx="50" cy="8" r="2.5" fill="#fff" />
                  <circle cx="60" cy="8" r="2.5" fill="#fff" />
                  <circle cx="69" cy="8" r="2.5" fill="#ef3a58" />
                  <path d="M23 20h15v15H23zM43 20h15v15H43zM23 40h15v15H23zM43 40h15v15H43z" fill="none" stroke="#6d6e71" strokeWidth="4" />
                </svg>
              </ActionItem>
              <ActionItem cls="w-[146px]" label="テキスト" low>
                <div className="flex h-[45px] w-[80px] items-center justify-center border-[3px] border-[#b0b0a8] bg-[#f4f4f4] text-[31px] font-bold leading-none">
                  AB
                  <svg width="14" height="36" viewBox="0 0 14 36">
                    <path d="M1 1h3l3 3 3-3h3M7 4v28M1 35h3l3-3 3 3h3" fill="none" stroke="#111" strokeWidth="3" />
                  </svg>
                </div>
              </ActionItem>
              <ActionItem cls="w-[74px]" label="画像" low>
                <svg width="80" height="59" viewBox="0 0 80 59" className="shrink-0">
                  <rect x="2.5" y="2.5" width="75" height="54" fill="#fff" stroke="#6d6e71" strokeWidth="5" />
                  <ellipse cx="24" cy="22" rx="7" ry="7" fill="#efd873" />
                  <path d="M10 48l18-14 12 4 12-18 8 10 6-2 4 20z" fill="#668fc8" />
                </svg>
              </ActionItem>
            </div>
            <div className="mt-[28px] pr-[18px] text-center text-[26px] leading-[36px]">アクション</div>
          </div>
          <div className="ml-[8px] mt-[5px] h-[219px] w-[3px] shrink-0 bg-[#dadada]" />
        </div>
      </div>
    </div>
  );
}
